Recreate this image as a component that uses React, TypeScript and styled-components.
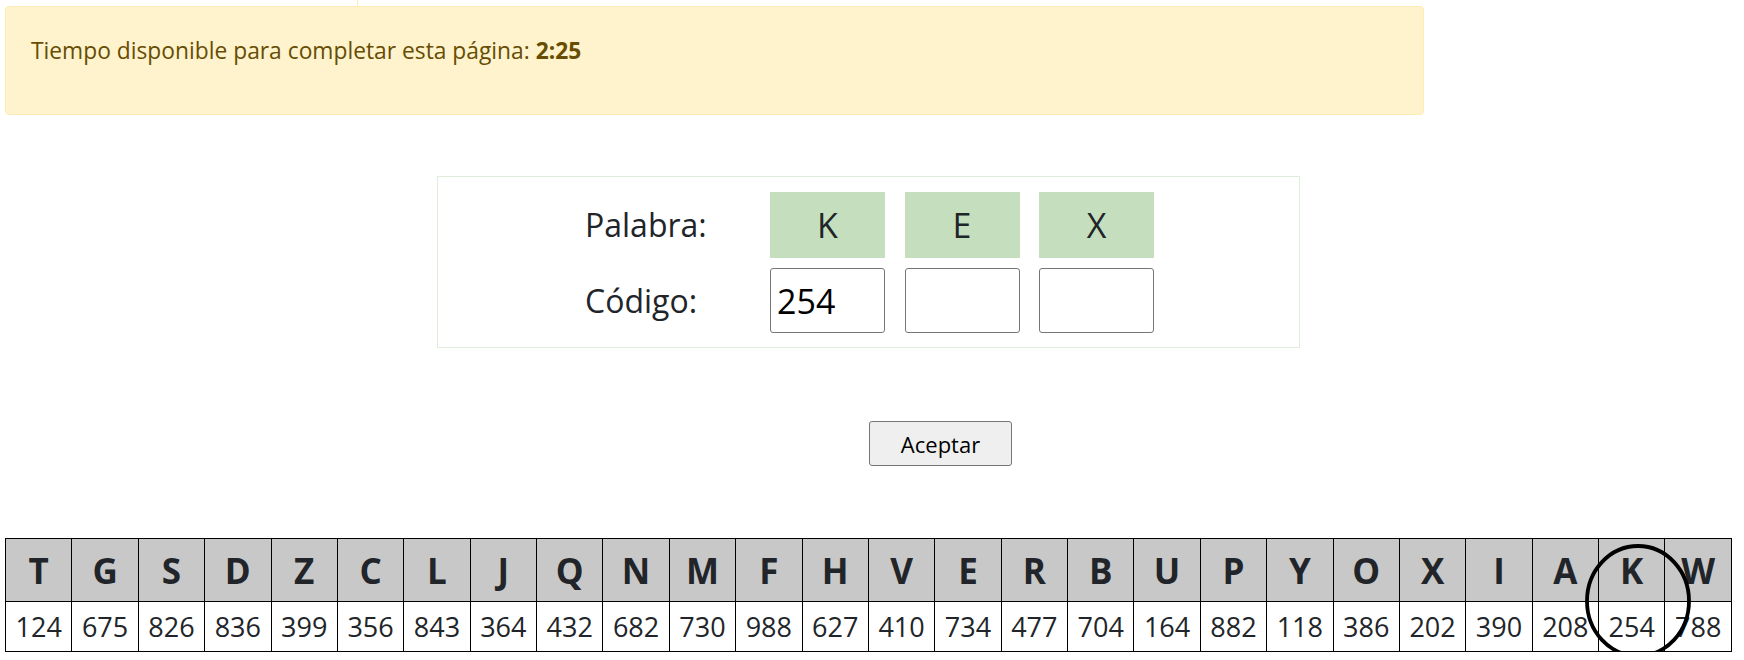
import React from 'react';
import styled, { createGlobalStyle } from 'styled-components';

const GlobalStyle = createGlobalStyle`
  body {
    margin: 0;
    background: #ffffff;
    color: #212529;
    font-family: "Open Sans", "Noto Sans", sans-serif;
  }
`;

const Page = styled.div`
  padding: 6px 0 0 5px;
`;

const Alert = styled.div`
  position: relative;
  box-sizing: border-box;
  width: 1419px;
  height: 109px;
  padding: 28px 25px 0;
  background: #fff3cd;
  border: 1px solid #ffecb5;
  border-radius: 4px;
  color: #664d03;
  font-size: 22.8px;
  line-height: 32px;

  &::before {
    content: '';
    position: absolute;
    left: 351px;
    top: -7px;
    width: 1px;
    height: 6px;
    background: #ffecb5;
  }
`;

const Panel = styled.div`
  box-sizing: border-box;
  width: 863px;
  margin: 61px 0 0 432px;
  padding: 15px 0 14px 147px;
  border: 1px solid #dfeddb;
`;

const Grid = styled.div`
  display: grid;
  grid-template-columns: 165.5px repeat(3, 115px);
  grid-template-rows: 66px 65px;
  column-gap: 19.5px;
  row-gap: 10px;
  align-items: center;
`;

const Label = styled.div`
  font-size: 32px;
  line-height: 40px;
`;

const Tile = styled.div`
  height: 66px;
  display: flex;
  align-items: center;
  justify-content: center;
  background: #c5dfbe;
  font-size: 34px;
`;

const CodeInput = styled.input`
  box-sizing: border-box;
  width: 115px;
  height: 65px;
  margin: 0;
  padding: 0 6px;
  border: 1px solid #767676;
  border-radius: 3px;
  background: #ffffff;
  color: #000000;
  font-family: "Open Sans", "Noto Sans", sans-serif;
  font-size: 34px;
  outline: none;
`;

const Button = styled.button`
  display: block;
  box-sizing: border-box;
  width: 143px;
  height: 45px;
  margin: 73px 0 0 864px;
  padding: 0;
  background: #efefef;
  border: 1px solid #767676;
  border-radius: 3px;
  color: #000000;
  font-family: "Open Sans", "Noto Sans", sans-serif;
  font-size: 22px;
`;

const TableWrap = styled.div`
  position: relative;
  width: 1727px;
  margin-top: 72px;
`;

const CodeTable = styled.table`
  width: 100%;
  table-layout: fixed;
  border-collapse: collapse;
`;

const Head = styled.th`
  height: 62px;
  padding: 0;
  border: 1px solid #000000;
  background: #c8c8c8;
  color: #212529;
  font-size: 35px;
  font-weight: 700;
  text-align: center;
`;

const Cell = styled.td`
  height: 49px;
  padding: 0;
  border: 1px solid #000000;
  font-size: 27px;
  text-align: center;
`;

const Ring = styled.svg`
  position: absolute;
  left: 1580px;
  top: 6px;
  width: 106px;
  height: 114px;
  overflow: visible;
`;

const letters = 'TGSDZCLJQNMFHVERBUPYOXIAKW'.split('');
const codes = [
  124, 675, 826, 836, 399, 356, 843, 364, 432, 682, 730, 988, 627,
  410, 734, 477, 704, 164, 882, 118, 386, 202, 390, 208, 254, 788,
];

const word = ['K', 'E', 'X'];
const answers = ['254', '', ''];

export default function App() {
  return (
    <Page>
      <GlobalStyle />
      <Alert>
        Tiempo disponible para completar esta página: <b>2:25</b>
      </Alert>

      <Panel>
        <Grid>
          <Label>Palabra:</Label>
          {word.map((l, i) => (
            <Tile key={i}>{l}</Tile>
          ))}
          <Label>Código:</Label>
          {answers.map((v, i) => (
            <CodeInput key={i} defaultValue={v} />
          ))}
        </Grid>
      </Panel>

      <Button>Aceptar</Button>

      <TableWrap>
        <CodeTable>
          <thead>
            <tr>
              {letters.map((l) => (
                <Head key={l}>{l}</Head>
              ))}
            </tr>
          </thead>
          <tbody>
            <tr>
              {codes.map((c, i) => (
                <Cell key={i}>{c}</Cell>
              ))}
            </tr>
          </tbody>
        </CodeTable>
        <Ring viewBox="0 0 106 114">
          <ellipse cx="53" cy="57" rx="51" ry="55" fill="none" stroke="#000" strokeWidth="3.8" />
        </Ring>
      </TableWrap>
    </Page>
  );
}
